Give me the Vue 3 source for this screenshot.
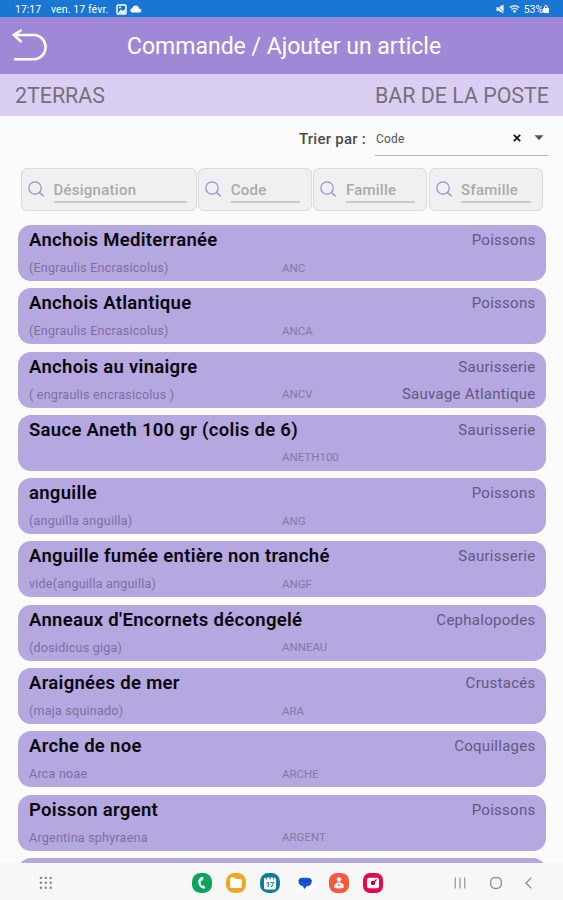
<!-- App.vue -->
<script setup>
import { ref } from 'vue'

const sortBy = ref('Code')

const filters = [
  { label: 'Désignation', size: 'large' },
  { label: 'Code', size: 'small' },
  { label: 'Famille', size: 'small' },
  { label: 'Sfamille', size: 'small' }
]

const articles = [
  { name: 'Anchois Mediterranée', latin: '(Engraulis Encrasicolus)', code: 'ANC', family: 'Poissons' },
  { name: 'Anchois Atlantique', latin: '(Engraulis Encrasicolus)', code: 'ANCA', family: 'Poissons' },
  { name: 'Anchois au vinaigre', latin: '( engraulis encrasicolus )', code: 'ANCV', family: 'Saurisserie', origin: 'Sauvage Atlantique' },
  { name: 'Sauce Aneth 100 gr (colis de 6)', latin: '', code: 'ANETH100', family: 'Saurisserie' },
  { name: 'anguille', latin: '(anguilla anguilla)', code: 'ANG', family: 'Poissons' },
  { name: 'Anguille fumée entière non tranché', latin: 'vide(anguilla anguilla)', code: 'ANGF', family: 'Saurisserie' },
  { name: "Anneaux d'Encornets décongelé", latin: '(dosidicus giga)', code: 'ANNEAU', family: 'Cephalopodes' },
  { name: 'Araignées de mer', latin: '(maja squinado)', code: 'ARA', family: 'Crustacés' },
  { name: 'Arche de noe', latin: 'Arca noae', code: 'ARCHE', family: 'Coquillages' },
  { name: 'Poisson argent', latin: 'Argentina sphyraena', code: 'ARGENT', family: 'Poissons' },
  { name: '', latin: '', code: '', family: '' }
]
</script>

<template>
  <div class="screen">
    <div class="status-bar">
      <span class="time">17:17</span>
      <span class="date">ven. 17 févr.</span>
      <svg class="status-picture" width="11" height="11" viewBox="0 0 11 11">
        <rect x="1" y="1" width="9" height="9" rx="1" fill="none" stroke="#fff" stroke-width="1.5" />
        <path d="M2 9 5 5.5 7 7l2-2v4z" fill="#fff" />
        <circle cx="4" cy="3.6" r="1" fill="#fff" />
      </svg>
      <svg width="12" height="8" viewBox="0 0 12 8">
        <path d="M2 7.500a2.200 2.200 0 0 1 .3-4.300A3.400 3.400 0 0 1 9 3.800a1.900 1.900 0 0 1 1 3.700z" fill="#fff" />
      </svg>
      <div class="status-right">
        <svg width="9" height="10" viewBox="0 0 9 10">
          <path d="M.5 3.300h2.200L7.500.5v9L2.700 6.700H.5z" fill="#fff" />
          <path d="m1 1 7 8" stroke="#1976d2" stroke-width=".8" />
        </svg>
        <svg class="wifi" width="11" height="10" viewBox="0 0 11 10">
          <path d="M.8 3.6a7 7 0 0 1 9.4 0M2.4 5.7a4.7 4.7 0 0 1 6.2 0" fill="none" stroke="#cfe3f7" stroke-width="1.5" />
          <path d="M3.8 7.1a2.5 2.5 0 0 1 3.4 0L5.5 9z" fill="#fff" />
        </svg>
        <span class="battery">53%</span>
        <svg width="6" height="10" viewBox="0 0 6 10">
          <path d="M1.7 4V2.8a1.3 1.3 0 0 1 2.6 0V4" fill="none" stroke="#fff" />
          <rect x="0" y="4" width="6" height="5" rx="1" fill="#fff" />
        </svg>
      </div>
    </div>

    <header class="app-header">
      <svg class="back" width="36" height="32" viewBox="0 0 36 32">
        <path d="M2 28.300h20.500a12.200 12.200 0 0 0 0-24.300H2M9.500 -1 1.800 4l7.700 7" fill="none" stroke="#fff" stroke-width="2.500" />
      </svg>
      <h1>Commande / Ajouter un article</h1>
    </header>

    <div class="client-bar">
      <span class="client-code">2TERRAS</span>
      <span class="client-name">BAR DE LA POSTE</span>
    </div>

    <div class="sort-row">
      <span class="sort-label">Trier par :</span>
      <div class="sort-select">
        <span class="sort-value">{{ sortBy }}</span>
        <svg class="clear" width="8" height="8" viewBox="0 0 8 8">
          <path d="m.8.8 6.4 6.4M7.2.8.8 7.2" stroke="#111" stroke-width="1.7" />
        </svg>
        <svg width="10" height="6" viewBox="0 0 10 6">
          <path d="M.5.300h9L5 5.200z" fill="#555" />
        </svg>
      </div>
    </div>

    <div class="filters">
      <div v-for="filter in filters" :key="filter.label" class="filter" :class="filter.size">
        <svg width="18" height="18" viewBox="0 0 18 18">
          <circle cx="7" cy="7" r="6.200" fill="none" stroke="#9b8ad6" stroke-width="1.200" />
          <path d="m11.400 11.500 4.300 3.800" stroke="#9b8ad6" stroke-width="1.500" />
        </svg>
        <div class="field">{{ filter.label }}</div>
      </div>
    </div>

    <main class="article-list">
      <article v-for="(article, index) in articles" :key="index" class="article">
        <div class="line top">
          <span class="name">{{ article.name }}</span>
          <span class="family">{{ article.family }}</span>
        </div>
        <div class="line bottom">
          <span class="latin">{{ article.latin }}</span>
          <span class="code">{{ article.code }}</span>
          <span class="family">{{ article.origin }}</span>
        </div>
      </article>
    </main>

    <nav class="nav-bar">
      <svg class="grid-icon" width="14" height="14" viewBox="0 0 14 14" fill="#858585">
        <template v-for="row in 3" :key="row">
          <circle v-for="col in 3" :key="col" :cx="col * 4.9 - 3" :cy="row * 4.9 - 3" r="1.2" />
        </template>
      </svg>

      <div class="dock">
        <svg width="20" height="20" viewBox="0 0 20 20">
          <rect width="20" height="20" rx="8.5" fill="#0ba45c" />
          <path d="M9 4.200c-3.500 1.500-4.200 8 1.200 11.100 1.100.7 2.900.2 3.200-.9l-2-2.200-1.400.7C8.600 12 8.300 9.200 9 7.800l1.700-.2.900-2.700C11 3.900 10 3.800 9 4.200z" fill="#fff" />
        </svg>
        <svg width="20" height="20" viewBox="0 0 20 20">
          <rect width="20" height="20" rx="8.5" fill="#f2a51e" />
          <path d="M4 6q0-1.500 1.500-1.500h3L10 6h4.500Q16 6 16 7.500v6q0 1.500-1.500 1.500h-9Q4 15 4 13.500z" fill="#fff" />
        </svg>
        <svg width="20" height="20" viewBox="0 0 20 20">
          <rect width="20" height="20" rx="8.5" fill="#117a9d" />
          <rect x="4" y="4.5" width="12" height="12" rx="2" fill="#fff" />
          <path d="M6.300 3.500v3M10 3.500v3M13.700 3.500v3" stroke="#117a9d" stroke-width="1" />
          <text x="10" y="13.800" text-anchor="middle" class="day">17</text>
        </svg>
        <svg width="20" height="20" viewBox="0 0 20 20">
          <rect width="20" height="20" rx="8.5" fill="#fbfcff" />
          <path d="M3.500 8.300c0-2 1.500-3.500 3.500-3.500h5.500c2.500 0 4.200 1.400 4.200 3.400 0 2.900-1.800 4.800-4.200 4.800h-.7l-2.300 3-1.800-3C5 12.700 3.500 10.800 3.500 8.300z" fill="#1456d9" />
          <path d="M4 7.200c2 1.600 8 1.600 12.500 0" fill="none" stroke="#0b45b8" stroke-width="1.500" />
        </svg>
        <svg width="20" height="20" viewBox="0 0 20 20">
          <rect width="20" height="20" rx="8" fill="#fa583f" />
          <circle cx="10" cy="6.500" r="2.300" fill="#fff" />
          <path d="M5.200 14.500c-.4-3 1.800-5 4.800-5s5.200 2 4.800 5q-4.800 2-9.600 0z" fill="#fff" />
          <path d="M8.300 11.500h3.400L10 13.200z" fill="#fa583f" />
        </svg>
        <svg width="20" height="20" viewBox="0 0 20 20">
          <rect width="20" height="20" rx="7" fill="#e3084b" />
          <rect x="4" y="4.700" width="12" height="10.600" rx="2" fill="#fff" />
          <circle cx="10" cy="10" r="2.200" fill="#a80b42" />
          <path d="m11 9 2.500-2.500" stroke="#a80b42" stroke-width="1.200" />
        </svg>
      </div>

      <div class="system">
        <svg width="12" height="12" viewBox="0 0 12 12">
          <path d="M1.200.5v11M6 .5v11M10.800.5v11" stroke="#8b8b8b" stroke-width="1.100" />
        </svg>
        <svg width="12" height="12" viewBox="0 0 12 12">
          <rect x=".7" y=".7" width="10.600" height="10.600" rx="4" fill="none" stroke="#858585" stroke-width="1.200" />
        </svg>
        <svg width="7" height="12" viewBox="0 0 7 12">
          <path d="M6.300.7 1 6l5.300 5.300" fill="none" stroke="#858585" stroke-width="1.200" />
        </svg>
      </div>
    </nav>
  </div>
</template>

<style>
body {
  margin: 0;
  overflow: hidden;
}
</style>

<style scoped>
.screen {
  width: 563px;
  height: 900px;
  display: flex;
  flex-direction: column;
  background: #fbfbfb;
  font-family: Roboto, "Liberation Sans", sans-serif;
  overflow: hidden;
}

svg {
  display: block;
  flex: none;
  overflow: visible;
}

.status-bar {
  height: 17px;
  flex: none;
  box-sizing: border-box;
  padding: 1px 14px 0 15px;
  display: flex;
  align-items: center;
  background: #1976d2;
  color: #fff;
  font-size: 10.5px;
  white-space: nowrap;
}

.time {
  width: 36px;
}

.date {
  width: 65px;
  letter-spacing: 0.1px;
}

.status-picture {
  margin-right: 3px;
}

.status-right {
  margin-left: auto;
  display: flex;
  align-items: center;
}

.wifi {
  margin: 0 4px;
}

.battery {
  letter-spacing: -0.1px;
}

.app-header {
  height: 56.5px;
  flex: none;
  display: flex;
  align-items: center;
  background: #9f89d6;
}

.back {
  margin: 3px 0 0 12px;
}

h1 {
  margin: 2px 0 0 79px;
  color: #fff;
  font-size: 23px;
  font-weight: 400;
  white-space: nowrap;
}

.client-bar {
  height: 42.5px;
  flex: none;
  box-sizing: border-box;
  padding: 2px 14px 0 15px;
  display: flex;
  align-items: center;
  justify-content: space-between;
  background: #dacff3;
  color: #75707d;
  font-size: 21.4px;
}

.sort-row {
  height: 52px;
  flex: none;
  display: flex;
  justify-content: flex-end;
  padding-right: 15px;
}

.sort-label {
  margin: 14px 9px 0 0;
  color: #4b4b4b;
  font-size: 15px;
  font-weight: 500;
  line-height: 19px;
  letter-spacing: 0.25px;
}

.sort-select {
  width: 173px;
  height: 40px;
  box-sizing: border-box;
  padding: 5px 4px 0 1px;
  display: flex;
  align-items: center;
  border-bottom: 1px solid #b5b5b5;
}

.sort-value {
  flex: 1;
  padding-top: 1px;
  color: #555;
  font-size: 12px;
  letter-spacing: 0.2px;
}

.clear {
  margin-right: 13px;
}

.filters {
  height: 57px;
  flex: none;
  padding-left: 21px;
  display: flex;
  align-items: flex-start;
  gap: 1.2px;
}

.filter {
  width: 114px;
  height: 43px;
  box-sizing: border-box;
  display: flex;
  border: 1px solid #dadada;
  border-radius: 6px;
  background: #f0f0f0;
  padding: 12px 11px 0 6px;
}

.filter.large {
  width: 176px;
  padding-right: 9px;
}

.field {
  flex: 1;
  height: 20px;
  margin-left: 7.5px;
  border-bottom: 2px solid #cbcbcb;
  color: #aaa;
  font-size: 15px;
  font-weight: 500;
  line-height: 18px;
  letter-spacing: 0.25px;
}

.article-list {
  height: 637.5px;
  flex: none;
  padding: 0 17.5px 0 18px;
  display: flex;
  flex-direction: column;
  gap: 7.3px;
  overflow: hidden;
}

.article {
  height: 56px;
  flex: none;
  box-sizing: border-box;
  padding: 3.5px 10px 0 11px;
  border-radius: 13px;
  background: #b5a7e0;
}

.line {
  display: flex;
  align-items: center;
  white-space: nowrap;
}

.top {
  height: 23px;
}

.bottom {
  height: 32px;
}

.name {
  color: #08060d;
  font-size: 18.5px;
  font-weight: 600;
  letter-spacing: 0.3px;
}

.family {
  margin-left: auto;
  color: #635780;
  font-size: 15px;
  letter-spacing: 0.27px;
}

.latin {
  width: 253px;
  color: #7d6f9e;
  font-size: 12.5px;
  letter-spacing: 0.24px;
}

.code {
  color: #8678a4;
  font-size: 11.5px;
}

.nav-bar {
  flex: 1;
  box-sizing: border-box;
  padding: 4px 31px 0 39px;
  display: flex;
  align-items: center;
  background: #f7f7f7;
}

.dock {
  margin-left: 139px;
  display: flex;
  gap: 14.2px;
}

.day {
  fill: #117a9d;
  font-size: 7.5px;
  font-weight: 700;
}

.system {
  margin-left: auto;
  display: flex;
  gap: 23.5px;
}
</style>
